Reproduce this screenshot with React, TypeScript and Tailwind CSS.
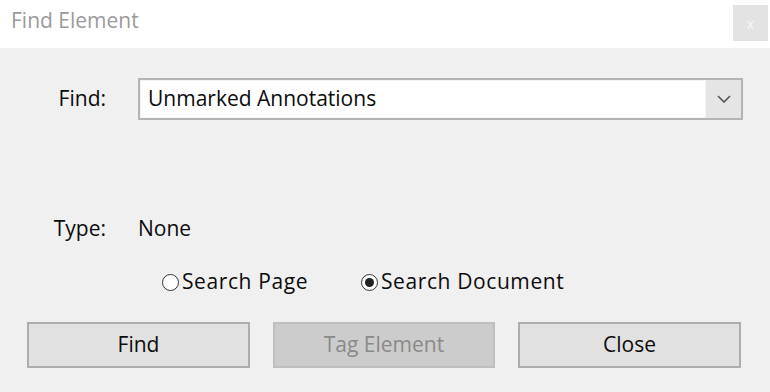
import React from 'react';

const font = { fontFamily: '"Open Sans", "Noto Sans", sans-serif' };

function Radio({ checked, label, width }: { checked?: boolean; label: string; width?: string }) {
  return (
    <label className={`flex items-center gap-[3px] ${width ?? ''}`}>
      <span className="w-[17px] h-[17px] rounded-full border-[1.5px] border-[#333] bg-white flex items-center justify-center">
        {checked && <span className="w-[9px] h-[9px] rounded-full bg-[#222]" />}
      </span>
      <span className="tracking-[0.6px]">{label}</span>
    </label>
  );
}

export default function App() {
  return (
    <div className="w-[770px] h-[392px] flex flex-col text-[21px] text-[#0c0c0c]" style={font}>
      {/* title bar */}
      <div className="h-[48px] bg-white flex items-start justify-between">
        <span className="ml-[11px] mt-[5px] text-[#9a9a9a]">Find Element</span>
        <div className="mt-[5px] mr-[2px] w-[35px] h-[36px] bg-[#e3e3e3] flex items-center justify-center text-[#f7f7f7] text-[14px]">
          x
        </div>
      </div>

      {/* body */}
      <div className="flex-1 bg-[#f0f0f0] flex flex-col">
        <div className="mt-[30px] flex items-center h-[42px]">
          <span className="w-[106px] text-right">Find:</span>
          <div className="ml-[32px] w-[605px] h-[42px] border-2 border-[#b4b4b4] bg-[#e5e5e5] flex">
            <div className="flex-1 bg-white border border-[#f4f4f4] flex items-center pl-[7px]">
              Unmarked Annotations
            </div>
            <div className="w-[35px] flex items-center justify-center">
              <svg width="14" height="8" viewBox="0 0 14 8" fill="none">
                <path d="M1 1l6 6 6-6" stroke="#555" strokeWidth="1.6" />
              </svg>
            </div>
          </div>
        </div>

        <div className="mt-[97px] flex items-center h-[24px]">
          <span className="w-[106px] text-right">Type:</span>
          <span className="ml-[32px]">None</span>
        </div>

        <div className="mt-[29px] flex items-center h-[24px] pl-[162px]">
          <Radio label="Search Page" width="w-[199px]" />
          <Radio checked label="Search Document" />
        </div>

        <div className="mt-[28px] flex pl-[27px] gap-[23px]">
          <button className="w-[223px] h-[46px] bg-[#e1e1e1] border-2 border-[#adadad]">Find</button>
          <button className="w-[222px] h-[46px] bg-[#cccccc] border-2 border-[#bfbfbf] text-[#8a8a8a]" disabled>
            Tag Element
          </button>
          <button className="w-[223px] h-[46px] bg-[#e1e1e1] border-2 border-[#adadad]">Close</button>
        </div>
      </div>
    </div>
  );
}
